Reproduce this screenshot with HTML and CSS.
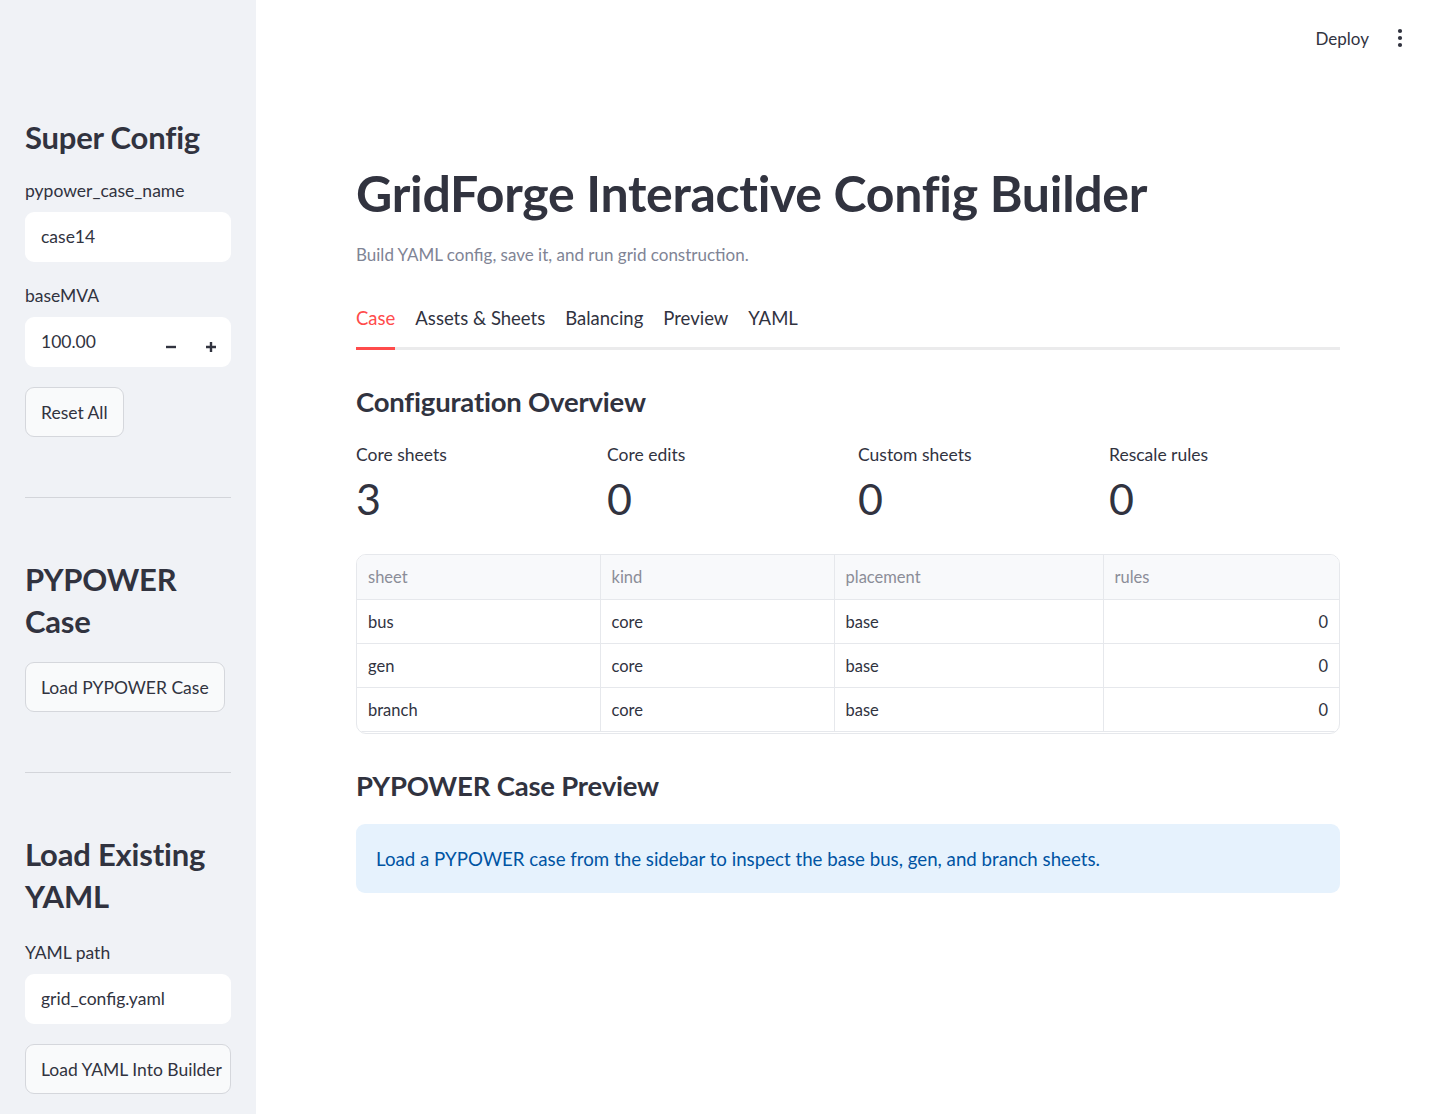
FILE: index.html
```html
<!DOCTYPE html>
<html lang="en">
<head>
    <meta charset="UTF-8">
    <meta name="viewport" content="width=device-width, initial-scale=1.0">
    <title>GridForge Interactive Config Builder</title>
    <link rel="stylesheet" href="styles.css">
</head>
<body>
    <aside class="sidebar">
        <h2 class="side-title first">Super Config</h2>
        <label class="field-label">pypower_case_name</label>
        <div class="text-input">case14</div>

        <label class="field-label">baseMVA</label>
        <div class="text-input number-input">
            <span class="num-value">100.00</span>
            <span class="step-btn">
                <svg width="12" height="12" viewBox="0 0 12 12"><path d="M1 6h10" stroke="#31333f" stroke-width="2.4"/></svg>
            </span>
            <span class="step-btn">
                <svg width="12" height="12" viewBox="0 0 12 12"><path d="M1 6h10M6 1v10" stroke="#31333f" stroke-width="2.4"/></svg>
            </span>
        </div>

        <button class="btn">Reset All</button>

        <hr class="divider">

        <h2 class="side-title">PYPOWER Case</h2>
        <button class="btn">Load PYPOWER Case</button>

        <hr class="divider">

        <h2 class="side-title">Load Existing YAML</h2>
        <label class="field-label path-label">YAML path</label>
        <div class="text-input">grid_config.yaml</div>
        <button class="btn btn-full">Load YAML Into Builder</button>
    </aside>

    <main class="main">
        <header class="topbar">
            <span class="deploy">Deploy</span>
            <svg class="kebab" width="6" height="20" viewBox="0 0 6 20">
                <circle cx="3" cy="3" r="2.1" fill="#31333f"/>
                <circle cx="3" cy="10" r="2.1" fill="#31333f"/>
                <circle cx="3" cy="17" r="2.1" fill="#31333f"/>
            </svg>
        </header>

        <section class="content">
            <h1 class="page-title">GridForge Interactive Config Builder</h1>
            <p class="caption">Build YAML config, save it, and run grid construction.</p>

            <nav class="tabs">
                <span class="tab active">Case</span>
                <span class="tab">Assets &amp; Sheets</span>
                <span class="tab">Balancing</span>
                <span class="tab">Preview</span>
                <span class="tab">YAML</span>
            </nav>

            <h3 class="section-title">Configuration Overview</h3>

            <div class="metrics">
                <div class="metric">
                    <div class="metric-label">Core sheets</div>
                    <div class="metric-value">3</div>
                </div>
                <div class="metric">
                    <div class="metric-label">Core edits</div>
                    <div class="metric-value">0</div>
                </div>
                <div class="metric">
                    <div class="metric-label">Custom sheets</div>
                    <div class="metric-value">0</div>
                </div>
                <div class="metric">
                    <div class="metric-label">Rescale rules</div>
                    <div class="metric-value">0</div>
                </div>
            </div>

            <div class="frame">
                <table class="sheet-table">
                    <colgroup>
                        <col style="width:243px">
                        <col style="width:234px">
                        <col style="width:269px">
                        <col>
                    </colgroup>
                    <tr>
                        <th>sheet</th>
                        <th>kind</th>
                        <th>placement</th>
                        <th>rules</th>
                    </tr>
                    <tr>
                        <td>bus</td>
                        <td>core</td>
                        <td>base</td>
                        <td class="num">0</td>
                    </tr>
                    <tr>
                        <td>gen</td>
                        <td>core</td>
                        <td>base</td>
                        <td class="num">0</td>
                    </tr>
                    <tr>
                        <td>branch</td>
                        <td>core</td>
                        <td>base</td>
                        <td class="num">0</td>
                    </tr>
                </table>
            </div>

            <h3 class="section-title preview-title">PYPOWER Case Preview</h3>

            <div class="info-box">Load a PYPOWER case from the sidebar to inspect the base bus, gen, and branch sheets.</div>
        </section>
    </main>
</body>
</html>
```

FILE: styles.css
```css
body{
    margin: 0;
    display: flex;
    min-height: 1114px;
    font-family: "Lato", "Liberation Sans", sans-serif;
    color: #31333f;
    background: #ffffff;
}

/* sidebar */
.sidebar{
    width: 256px;
    flex-shrink: 0;
    box-sizing: border-box;
    padding: 0 25px;
    background: #f0f2f6;
    display: flex;
    flex-direction: column;
}
.side-title{
    margin: 0;
    font-size: 31px;
    line-height: 42px;
    font-weight: 700;
    letter-spacing: -0.2px;
}
.side-title.first{
    margin-top: 116px;
}
.field-label{
    display: block;
    margin-top: 23px;
    font-size: 17.5px;
    line-height: 22px;
}
.side-title + .field-label{
    margin-top: 22px;
}
.side-title + .path-label{
    margin-top: 25px;
}
.text-input{
    margin-top: 10px;
    height: 50px;
    box-sizing: border-box;
    padding: 0 16px;
    background: #ffffff;
    border-radius: 9px;
    font-size: 17.5px;
    line-height: 50px;
    display: flex;
    align-items: center;
}
.number-input{
    padding-right: 0;
}
.num-value{
    flex: 1;
}
.step-btn{
    width: 40px;
    height: 50px;
    display: flex;
    align-items: center;
    justify-content: center;
    padding-top: 10px;
    box-sizing: border-box;
}
.btn{
    align-self: flex-start;
    margin-top: 20px;
    height: 50px;
    padding: 0 15px;
    background: #f9fafb;
    border: 1px solid #d5d7dc;
    border-radius: 9px;
    font-family: inherit;
    font-size: 17.5px;
    color: #31333f;
    white-space: nowrap;
}
.btn-full{
    align-self: stretch;
    text-align: left;
}
.divider{
    margin: 60px 0 0;
    border: 0;
    border-top: 1px solid #d3d5da;
}
.divider + .side-title{
    margin-top: 60px;
}
.divider + .side-title + .btn{
    margin-top: 20px;
}

/* main area */
.main{
    flex: 1;
    padding: 0 100px;
    position: relative;
}
.topbar{
    position: absolute;
    top: 0;
    right: 0;
    height: 76px;
    display: flex;
    align-items: center;
    padding-right: 37px;
}
.deploy{
    font-size: 17px;
    margin-right: 28px;
}
.content{
    padding-top: 160px;
}
.page-title{
    margin: 0;
    font-size: 50px;
    line-height: 66px;
    font-weight: 700;
    letter-spacing: -0.3px;
}
.caption{
    margin: 17px 0 0;
    font-size: 17px;
    line-height: 24px;
    color: #808495;
}
.tabs{
    margin-top: 31px;
    display: flex;
    gap: 20px;
    border-bottom: 3px solid #ebebec;
}
.tab{
    font-size: 18.5px;
    line-height: 24px;
    padding: 8px 0 17px;
    margin-bottom: -3px;
    border-bottom: 3px solid transparent;
}
.tab.active{
    color: #ff4b4b;
    border-bottom-color: #ff4b4b;
}
.section-title{
    margin: 34px 0 0;
    font-size: 27.5px;
    line-height: 36px;
    font-weight: 700;
    letter-spacing: -0.2px;
}
.metrics{
    margin-top: 23px;
    display: grid;
    grid-template-columns: repeat(4, 1fr);
    gap: 20px;
}
.metric-label{
    font-size: 17.5px;
    line-height: 24px;
}
.metric-value{
    margin-top: 7px;
    font-size: 43px;
    line-height: 50px;
}
.frame{
    margin-top: 30px;
    padding-bottom: 1px;
    border: 1px solid #e6e8ec;
    border-radius: 10px;
    overflow: hidden;
}
.sheet-table{
    width: 100%;
    border-collapse: collapse;
    table-layout: fixed;
    font-size: 16.5px;
}
.sheet-table th,
.sheet-table td{
    height: 43px;
    padding: 0 11px;
    text-align: left;
    border-right: 1px solid #e6e8ec;
    border-bottom: 1px solid #e6e8ec;
}
.sheet-table th:last-child,
.sheet-table td:last-child{
    border-right: 0;
}
.sheet-table th{
    height: 44px;
    background: #f8f9fb;
    font-weight: 400;
    color: #8b8d98;
}
.sheet-table td.num{
    text-align: right;
}
.preview-title{
    margin-top: 34px;
}
.info-box{
    margin-top: 20px;
    padding: 0 20px;
    height: 69px;
    display: flex;
    align-items: center;
    background: #e6f2fd;
    border-radius: 9px;
    color: #0054a3;
    font-size: 18.7px;
}
```
